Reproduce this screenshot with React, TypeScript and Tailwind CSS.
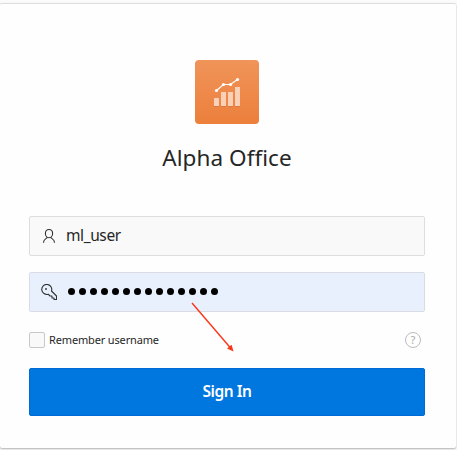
import React from 'react';

function ChartLogo() {
  return (
    <div className="h-16 w-16 rounded-[4px] bg-linear-to-b from-[#f09459] to-[#ec7f3b]">
      <svg width="64" height="64" viewBox="0 0 64 64" fill="none">
        <g fill="#000" fillOpacity="0.08">
          <path d="M19 39h5v8h-5zM26 33h5v14h-5zM33 33h5v14h-5zM40 28h5v19h-5z" />
        </g>
        <g fill="#fad0b7">
          <path d="M19 38h5v8h-5zM26 32h5v14h-5zM33 32h5v14h-5zM40 27h5v19h-5z" />
        </g>
        <path d="M21.5 30.5 28.5 24.5h7l7-5" stroke="#fff" strokeWidth="1.2" />
        <g fill="#fff">
          <circle cx="21.5" cy="30.5" r="1.6" />
          <circle cx="28.5" cy="24.5" r="1.6" />
          <circle cx="35.5" cy="24.5" r="1.6" />
          <circle cx="42.5" cy="19.5" r="1.6" />
        </g>
      </svg>
    </div>
  );
}

function UserIcon() {
  return (
    <svg width="16" height="16" viewBox="0 0 16 16" fill="none" stroke="#303030" strokeWidth="1.1">
      <path d="M8 1.5c2.4 0 3.6 1.7 3.6 4S10 9.8 8 9.8 4.4 7.8 4.4 5.5 5.6 1.5 8 1.5z" />
      <path d="M6.3 9.3C5.7 11 2.500 10.6 2.500 14.8M9.7 9.3c.6 1.7 3.8 1.3 3.8 5.5" />
    </svg>
  );
}

function KeyIcon() {
  return (
    <svg width="16" height="16" viewBox="0 0 16 16" fill="none" stroke="#303030" strokeWidth="1.1" strokeLinejoin="round">
      <path d="M10.5 7 15.5 12v3.5H13V14h-2v-2H9L7.2 10.2A5 5 0 1 1 10.5 7z" />
      <circle cx="5" cy="5" r="0.9" fill="#303030" stroke="none" />
    </svg>
  );
}

export default function App() {
  return (
    <div className="relative h-[450px] w-[457px] overflow-hidden bg-[#fbfbfb] pt-[3px] font-['Noto_Sans',sans-serif] text-[#262626]">
      <main className="flex h-[445px] w-[456px] flex-col rounded-[2px] border-t border-[#dedede] bg-[#fefefe] pr-[31px] pl-[29px] shadow-[0_1px_2px_rgba(0,0,0,0.3)]">
        <div className="mt-14 flex justify-center">
          <ChartLogo />
        </div>
        <h1 className="mt-[18px] h-8 text-center text-[22.5px] leading-8 tracking-[0.05px] whitespace-nowrap">Alpha Office</h1>
        <div className="mt-[42px] flex h-10 shrink-0 items-center rounded-[2px] border border-[#dedede] bg-[#f9f9f9] pl-[11px]">
          <UserIcon />
          <span className="mb-0.5 ml-[9px] text-[15.5px] leading-5 tracking-[-0.4px]">ml_user</span>
        </div>
        <div className="mt-4 flex h-10 shrink-0 items-center rounded-[2px] border border-[#d9dce2] bg-[#e8f0fe] pl-[11px]">
          <KeyIcon />
          <div className="mb-px ml-[11px] flex gap-1">
            {Array.from({ length: 14 }, (_, i) => (
              <span key={i} className="h-[7px] w-[7px] rounded-full bg-black" />
            ))}
          </div>
        </div>
        <div className="mt-5 flex h-4 shrink-0 items-center">
          <span className="h-4 w-4 rounded-[2px] border border-[#c9c9c9] bg-[#f9f9f9]" />
          <span className="ml-1 text-[11px] leading-4 tracking-[-0.15px]">Remember username</span>
          <span className="mr-1 ml-auto flex h-4 w-4 items-center justify-center rounded-full border border-[#bcbcbc] text-[11px] leading-none font-medium text-[#b4b4b4]">
            <span className="-mt-px">?</span>
          </span>
        </div>
        <button className="mt-5 h-12 shrink-0 rounded-[2px] border border-[#006bd8] bg-[#0076df] text-[15.5px] font-semibold tracking-[-0.45px] text-white">
          Sign In
        </button>
      </main>
      <svg className="absolute top-[300px] left-[188px]" width="50" height="55" viewBox="0 0 50 55" fill="none">
        <path d="M4 3 43 48.5" stroke="#fb3616" strokeWidth="1.4" />
        <path d="m45.5 51.5-6.5-3 4.6-3.8z" fill="#fb3616" />
      </svg>
    </div>
  );
}
